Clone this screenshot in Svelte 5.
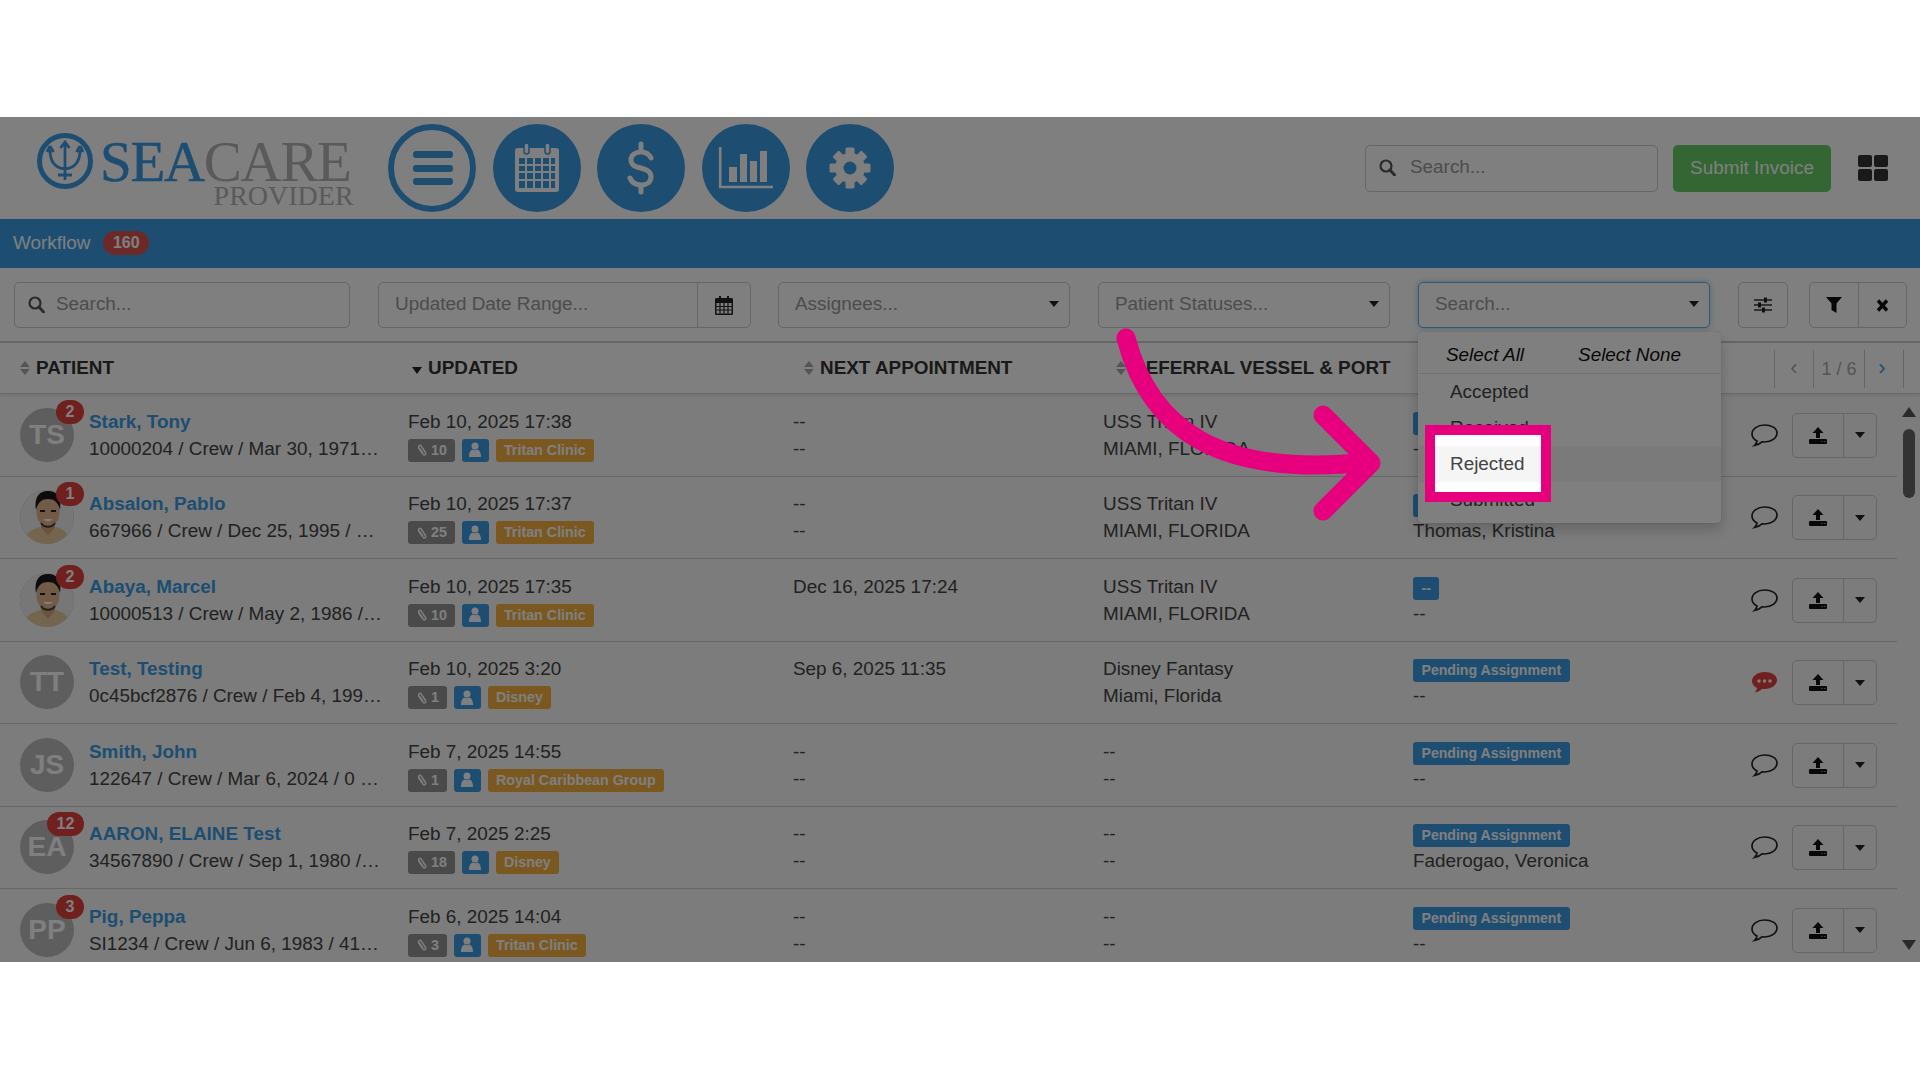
<script>
  const rows = [
    { name: 'Stark, Tony', ini: 'TS', badge: 2, info: '10000204 / Crew / Mar 30, 1971…', date: 'Feb 10, 2025 17:38', clips: 10, org: 'Tritan Clinic', appt: ['--', '--'], vessel: ['USS Tritan IV', 'MIAMI, FLORIDA'], status: '--', who: '--' },
    { name: 'Absalon, Pablo', photo: true, badge: 1, info: '667966 / Crew / Dec 25, 1995 / …', date: 'Feb 10, 2025 17:37', clips: 25, org: 'Tritan Clinic', appt: ['--', '--'], vessel: ['USS Tritan IV', 'MIAMI, FLORIDA'], status: '--', who: 'Thomas, Kristina' },
    { name: 'Abaya, Marcel', photo: true, badge: 2, info: '10000513 / Crew / May 2, 1986 /…', date: 'Feb 10, 2025 17:35', clips: 10, org: 'Tritan Clinic', appt: ['Dec 16, 2025 17:24', ''], vessel: ['USS Tritan IV', 'MIAMI, FLORIDA'], status: '--', who: '--' },
    { name: 'Test, Testing', ini: 'TT', info: '0c45bcf2876 / Crew / Feb 4, 199…', date: 'Feb 10, 2025 3:20', clips: 1, org: 'Disney', appt: ['Sep 6, 2025 11:35', ''], vessel: ['Disney Fantasy', 'Miami, Florida'], status: 'Pending Assignment', who: '--', unread: true },
    { name: 'Smith, John', ini: 'JS', info: '122647 / Crew / Mar 6, 2024 / 0 …', date: 'Feb 7, 2025 14:55', clips: 1, org: 'Royal Caribbean Group', appt: ['--', '--'], vessel: ['--', '--'], status: 'Pending Assignment', who: '--' },
    { name: 'AARON, ELAINE Test', ini: 'EA', badge: 12, info: '34567890 / Crew / Sep 1, 1980 /…', date: 'Feb 7, 2025 2:25', clips: 18, org: 'Disney', appt: ['--', '--'], vessel: ['--', '--'], status: 'Pending Assignment', who: 'Faderogao, Veronica' },
    { name: 'Pig, Peppa', ini: 'PP', badge: 3, info: 'SI1234 / Crew / Jun 6, 1983 / 41…', date: 'Feb 6, 2025 14:04', clips: 3, org: 'Tritan Clinic', appt: ['--', '--'], vessel: ['--', '--'], status: 'Pending Assignment', who: '--' }
  ];
  const statuses = ['Accepted', 'Received', 'Rejected', 'Submitted'];
  const teeth = [0, 45, 90, 135];
</script>

{#snippet searchIcon()}
  <svg class="mag" viewBox="0 0 17 17" width="17" height="17">
    <circle cx="7" cy="7" r="5.500" fill="none" stroke="currentColor" stroke-width="2.200" />
    <path d="M11 11l4.500 5" stroke="currentColor" stroke-width="2.800" stroke-linecap="round" />
  </svg>
{/snippet}

{#snippet sortIcon()}
  <span class="sort"><i class="up"></i><i class="down"></i></span>
{/snippet}

<div class="page">
  <div class="app">
    <header class="top">
      <div class="logo">
        <svg class="mark" viewBox="0 0 56 56" width="56" height="56">
          <circle cx="28" cy="28" r="25.500" fill="none" stroke="#3a9de4" stroke-width="5" />
          <path d="M28 9v38M23.500 15l4.500-6 4.500 6M13 17c0 11 5 18 15 19 10-1 15-8 15-19M13 13l-3 6M13 13l3.500 6M43 13l-3.500 6M43 13l3 6M21 42h14" fill="none" stroke="#3a9de4" stroke-width="2.800" />
        </svg>
        <div class="word">
          <div class="brand"><span class="sea">SEA</span><span class="care">CARE</span></div>
          <div class="provider">PROVIDER</div>
        </div>
      </div>

      <nav class="circles">
        <div class="circle ghost">
          <svg viewBox="0 0 88 88" width="88" height="88">
            <rect x="25" y="27" width="40" height="7" rx="3" />
            <rect x="25" y="41" width="40" height="7" rx="3" />
            <rect x="25" y="54" width="40" height="7" rx="3" />
          </svg>
        </div>
        <div class="circle">
          <svg viewBox="0 0 88 88" width="88" height="88">
            <rect x="22" y="24" width="44" height="44" rx="3" fill="#fff" />
            <rect x="31" y="19" width="5" height="11" rx="2.500" fill="#fff" stroke="#3a9de4" stroke-width="1.500" />
            <rect x="52" y="19" width="5" height="11" rx="2.500" fill="#fff" stroke="#3a9de4" stroke-width="1.500" />
            <path d="M26 34h36v30H26z" fill="#3a9de4" />
            <path d="M33 34v30M41 34v30M49 34v30M57 34v30M26 41h36M26 48h36M26 56h36" stroke="#fff" stroke-width="2" />
          </svg>
        </div>
        <div class="circle">
          <svg viewBox="0 0 88 88" width="88" height="88">
            <path d="M54 34c-2-4-6-6-10-6-6 0-10 3-10 8 0 11 20 5 20 17 0 5-4 8-10 8-5 0-9-2-11-7M44 20v8M44 61v7" fill="none" stroke="#fff" stroke-width="5" stroke-linecap="round" />
          </svg>
        </div>
        <div class="circle">
          <svg viewBox="0 0 88 88" width="88" height="88">
            <path d="M18.200 23v40h52.800" fill="none" stroke="#fff" stroke-width="2.600" />
            <rect x="27" y="43" width="8" height="15" fill="#fff" />
            <rect x="38" y="30" width="7" height="28" fill="#fff" />
            <rect x="48" y="37" width="7" height="21" fill="#fff" />
            <rect x="58" y="27" width="7" height="31" fill="#fff" />
          </svg>
        </div>
        <div class="circle">
          <svg viewBox="0 0 88 88" width="88" height="88">
            <g fill="#fff">
              {#each teeth as t}
                <rect x="39.500" y="23.500" width="9" height="41" rx="1.500" transform="rotate({t} 44 44)" />
              {/each}
            </g>
            <circle cx="44" cy="44" r="15" fill="#fff" />
            <circle cx="44" cy="44" r="6.500" fill="#3a9de4" />
          </svg>
        </div>
      </nav>

      <div class="top-right">
        <div class="input search-top">{@render searchIcon()}<span class="ph">Search...</span></div>
        <button class="submit">Submit Invoice</button>
        <div class="grid-icon"><i></i><i></i><i></i><i></i></div>
      </div>
    </header>

    <div class="bar">
      <span>Workflow</span>
      <span class="count">160</span>
    </div>

    <div class="filters">
      <div class="input f-search">{@render searchIcon()}<span class="ph">Search...</span></div>
      <div class="input f-date">
        <span class="ph">Updated Date Range...</span>
        <span class="addon">
          <svg viewBox="0 0 18 19" width="18" height="19">
            <path d="M4 0h2v3H4zM12 0h2v3h-2z" fill="#222" />
            <rect x="0" y="2" width="18" height="17" rx="1.500" fill="#222" />
            <path d="M1.500 7h15v10.500h-15z" fill="#fff" />
            <path d="M5 7v10.500M9 7v10.500M13 7v10.500M1.500 10.500h15M1.500 14h15" stroke="#222" stroke-width="1.200" />
          </svg>
        </span>
      </div>
      <div class="input select f-assign"><span class="ph">Assignees...</span><i class="caret"></i></div>
      <div class="input select f-pstatus"><span class="ph">Patient Statuses...</span><i class="caret"></i></div>
      <div class="status-filter">
        <div class="input select focus"><span class="ph">Search...</span><i class="caret"></i></div>
        <div class="dropdown">
          <div class="dd-head"><span>Select All</span><span>Select None</span></div>
          <ul>
            {#each statuses as s}
              <li class:hot={s === 'Rejected'}>{s}</li>
            {/each}
          </ul>
        </div>
      </div>
      <button class="tool sliders">
        <svg viewBox="0 0 18 16" width="18" height="16">
          <path d="M0 3h18M0 8h18M0 13h18" stroke="#333" stroke-width="1.500" />
          <rect x="10" y="0.500" width="3" height="5" fill="#222" />
          <rect x="4" y="5.500" width="3" height="5" fill="#222" />
          <rect x="8" y="10.500" width="3" height="5" fill="#222" />
        </svg>
      </button>
      <div class="tool-group">
        <button class="tool">
          <svg viewBox="0 0 16 16" width="16" height="16"><path d="M0 0h16l-5.500 6.500V16l-5-3V6.500z" fill="#111" /></svg>
        </button>
        <button class="tool">
          <svg viewBox="0 0 13 13" width="13" height="13"><path d="M2 1.500l9 10M11 1.500l-9 10" stroke="#111" stroke-width="3.400" /></svg>
        </button>
      </div>
    </div>

    <div class="thead">
      <div class="th th-patient">{@render sortIcon()}PATIENT</div>
      <div class="th th-updated"><i class="sort-caret"></i>UPDATED</div>
      <div class="th th-next">{@render sortIcon()}NEXT APPOINTMENT</div>
      <div class="th th-vessel">{@render sortIcon()}REFERRAL VESSEL &amp; PORT</div>
      <div class="pager">
        <span class="pg"><em class="off">‹</em></span>
        <span class="pg mid">1 / 6</span>
        <span class="pg"><em class="on">›</em></span>
      </div>
    </div>

    <div class="tbody">
      <div class="rows">
        {#each rows as r}
          <div class="row">
            <div class="cell patient">
              <div class="avatar">
                {#if r.photo}
                  <svg viewBox="0 0 54 54" width="54" height="54">
                    <circle cx="27" cy="27" r="27" fill="#eee" />
                    <path d="M3 54C4 44 10 40 20 37l8 9 8-9c8 2 13 7 15 17z" fill="#e8ca9e" />
                    <path d="M21 30h14v8l-7 8-7-8z" fill="#d9a680" />
                    <ellipse cx="28" cy="22" rx="11.500" ry="15" fill="#e3b48e" />
                    <path d="M16 20C14 6 20 1 28 1s14 5 12 19c-2-8-6-11-12-11s-10 3-12 11z" fill="#1a1716" />
                    <path d="M21 33c3 5 11 5 14 0" fill="none" stroke="#4a3a30" stroke-width="2" />
                    <path d="M20 21h5M31 21h5" stroke="#2a2020" stroke-width="1.800" />
                    <path d="M23 29c3 3 7 3 10 0z" fill="#fff" />
                  </svg>
                {:else}
                  {r.ini}
                {/if}
                {#if r.badge}<span class="pill" class:wide={r.badge > 9}>{r.badge}</span>{/if}
              </div>
              <div class="who">
                <div class="line"><a href="#top">{r.name}</a></div>
                <div class="line">{r.info}</div>
              </div>
            </div>
            <div class="cell updated">
              <div class="line">{r.date}</div>
              <div class="line chips">
                <span class="chip grey">
                  <svg viewBox="0 0 13 14" width="12" height="14"><path d="M2.500 4.500l5 7c1.500 2 4 .2 2.700-1.800L5.500 2.500C4.500 1 2 2.500 3 4.200l4.500 6.300" fill="none" stroke="#fff" stroke-width="1.600" /></svg>
                  {r.clips}
                </span>
                <span class="chip blue icon">
                  <svg viewBox="0 0 14 16" width="14" height="16"><circle cx="7" cy="4" r="3.500" fill="#fff" /><path d="M1 15c0-5 2-7 3.500-7.500 1.500 1 3.500 1 5 0C11 8 13 10 13 15z" fill="#fff" /></svg>
                </span>
                <span class="chip orange">{r.org}</span>
              </div>
            </div>
            <div class="cell next">
              <div class="line">{r.appt[0]}</div>
              <div class="line">{r.appt[1]}</div>
            </div>
            <div class="cell vessel">
              <div class="line">{r.vessel[0]}</div>
              <div class="line">{r.vessel[1]}</div>
            </div>
            <div class="cell state">
              <div class="line status-line"><span class="chip blue pad">{r.status}</span></div>
              <div class="line">{r.who}</div>
            </div>
            <div class="cell acts">
              <svg class="note" viewBox="0 0 27 23" width="27" height="23">
                {#if r.unread}
                  <path d="M13.500 1C6.600 1 1 5 1 10c0 3 2 5.500 5 7-.3 1.800-1.200 3.300-2.500 4.500 3-.5 5.500-1.700 7.500-3.600.8.1 1.700.1 2.500.1 6.900 0 12.500-4 12.500-9S20.400 1 13.500 1z" fill="#e0403c" />
                  <circle cx="8" cy="10" r="1.700" fill="#fff" /><circle cx="13.500" cy="10" r="1.700" fill="#fff" /><circle cx="19" cy="10" r="1.700" fill="#fff" />
                {:else}
                  <path d="M13.500 1C6.600 1 1 5 1 10c0 3 2 5.500 5 7-.3 1.800-1.200 3.300-2.500 4.500 3-.5 5.500-1.700 7.500-3.600.8.1 1.700.1 2.500.1 6.900 0 12.500-4 12.500-9S20.400 1 13.500 1z" fill="none" stroke="#222" stroke-width="1.700" />
                {/if}
              </svg>
              <div class="split">
                <button>
                  <svg viewBox="0 0 18 17" width="18" height="17">
                    <path d="M9 0l5.500 6H11v5H7V6H3.500z" fill="#111" />
                    <rect x="0" y="12" width="18" height="5" rx="1" fill="#111" />
                    <path d="M12.500 14.500h1.500M15 14.500h1.500" stroke="#888" stroke-width="1" />
                  </svg>
                </button>
                <button class="more"><i class="caret"></i></button>
              </div>
            </div>
          </div>
        {/each}
      </div>
      <div class="scroll">
        <i class="arrow-up"></i>
        <i class="thumb"></i>
        <i class="arrow-down"></i>
      </div>
    </div>

    <div class="spot"></div>
    <svg class="arrow" viewBox="0 117 1920 845" width="1920" height="845">
      <path d="M1126 338C1150 430 1220 478 1368 462M1323 415l48 48-48 48" fill="none" stroke="#e6007e" stroke-width="19" stroke-linecap="round" stroke-linejoin="round" />
    </svg>
  </div>
</div>

<style>
  :global(body) {
    margin: 0;
    background: #fff;
  }

  .page {
    height: 1080px;
    padding-top: 117px;
    box-sizing: border-box;
    overflow: hidden;
    font-family: "Liberation Sans", Arial, sans-serif;
    font-size: 18.900px;
    color: #444;
  }

  .app {
    position: relative;
    width: 1920px;
    height: 845px;
    overflow: hidden;
    background: #fff;
  }

  .top {
    height: 102px;
    display: flex;
    align-items: center;
    padding: 0 32px 0 37px;
    box-sizing: border-box;
  }

  .logo {
    width: 351px;
    display: flex;
    align-items: flex-start;
    height: 76px;
  }

  .mark {
    margin-top: 3px;
    flex: none;
  }

  .word {
    margin-left: 7px;
    font-family: "Liberation Serif", serif;
  }

  .brand {
    font-size: 57px;
    line-height: 46px;
    letter-spacing: -1.300px;
    margin-top: 9px;
    white-space: nowrap;
  }

  .sea {
    color: #3a9de4;
    -webkit-text-stroke: 0.500px #3a9de4;
  }

  .care {
    color: #b4b4b4;
  }

  .provider {
    font-size: 28px;
    line-height: 20px;
    color: #b4b4b4;
    text-align: right;
    margin-top: 1px;
    margin-right: -3px;
  }

  .circles {
    display: flex;
    gap: 16.500px;
  }

  .circle {
    width: 88px;
    height: 88px;
    border-radius: 50%;
    background: #3a9de4;
    display: flex;
    align-items: center;
    justify-content: center;
    color: #fff;
  }

  .circle.ghost {
    background: #fff;
    box-sizing: border-box;
    border: 6px solid #3a9de4;
  }

  .circle.ghost svg {
    flex: none;
    fill: #3a9de4;
  }

  .top-right {
    margin-left: auto;
    display: flex;
    align-items: center;
  }

  .input {
    height: 46px;
    box-sizing: border-box;
    border: 1.500px solid #ccc;
    border-radius: 5px;
    background: #fff;
    display: flex;
    align-items: center;
    padding: 0 16px 2px;
    flex: none;
  }

  .ph {
    color: #999;
  }

  .mag {
    color: #555;
    margin: 0 11px 0 -3px;
    flex: none;
  }

  .search-top {
    width: 293px;
    height: 47px;
  }

  .search-top .mag {
    margin-right: 14px;
  }

  .submit {
    width: 158px;
    height: 47px;
    margin-left: 15px;
    border: 0;
    border-radius: 5px;
    background: #66cc66;
    color: #fff;
    font: inherit;
    padding: 0;
  }

  .grid-icon {
    margin-left: 27px;
    display: grid;
    grid-template-columns: 14px 14px;
    gap: 2px;
  }

  .grid-icon i {
    height: 12px;
    border-radius: 2px;
    background: #333;
  }

  .bar {
    height: 49px;
    box-sizing: border-box;
    padding: 0 0 1px 13px;
    background: #3a9de4;
    color: #fff;
    display: flex;
    align-items: center;
  }

  .count {
    margin-left: 13px;
    width: 46px;
    height: 24px;
    border-radius: 12px;
    background: #d9534f;
    font-size: 16px;
    font-weight: 700;
    display: flex;
    align-items: center;
    justify-content: center;
  }

  .filters {
    height: 75px;
    box-sizing: border-box;
    border-bottom: 2px solid #ccc;
    display: flex;
    padding: 14px 0 0 14px;
    align-items: flex-start;
  }

  .f-search {
    width: 336px;
  }

  .f-date {
    width: 373px;
    margin-left: 28px;
    justify-content: space-between;
    padding: 0 0 0 16px;
  }

  .f-date .ph {
    padding-bottom: 2px;
  }

  .addon {
    width: 52px;
    height: 100%;
    border-left: 1.500px solid #ccc;
    display: flex;
    align-items: center;
    justify-content: center;
  }

  .select {
    justify-content: space-between;
    padding-right: 10px;
  }

  .caret {
    width: 0;
    height: 0;
    border: 5px solid transparent;
    border-top: 6px solid #222;
    border-bottom: 0;
  }

  .f-assign {
    width: 292px;
    margin-left: 27px;
  }

  .f-pstatus {
    width: 292px;
    margin-left: 28px;
  }

  .status-filter {
    position: relative;
    width: 292px;
    margin-left: 28px;
    flex: none;
  }

  .status-filter .input {
    width: 292px;
  }

  .focus {
    border-color: #66afe9;
    box-shadow: 0 0 6px rgba(102, 175, 233, 0.6);
  }

  .dropdown {
    position: absolute;
    z-index: 3;
    top: 50px;
    left: 0;
    width: 303px;
    height: 191px;
    box-sizing: border-box;
    background: #fff;
    border-radius: 4px;
    box-shadow: 0 6px 14px rgba(0, 0, 0, 0.2), 0 0 1px rgba(0, 0, 0, 0.3);
  }

  .dd-head {
    height: 42px;
    box-sizing: border-box;
    border-bottom: 1px solid #e5e5e5;
    display: flex;
    gap: 54px;
    padding: 4px 0 0 28px;
    align-items: center;
    font-style: italic;
    color: #111;
  }

  ul {
    list-style: none;
    margin: 0;
    padding: 0;
  }

  li {
    height: 36px;
    line-height: 35px;
    padding-left: 32px;
    color: #444;
  }

  li.hot {
    background: #f5f5f5;
  }

  .tool {
    border: 0;
    background: transparent;
    padding: 0;
    display: flex;
    align-items: center;
    justify-content: center;
    height: 100%;
    flex: 1;
  }

  .sliders {
    width: 50px;
    height: 46px;
    flex: none;
    margin-left: 28px;
    box-sizing: border-box;
    border: 1.500px solid #ccc;
    border-radius: 5px;
  }

  .tool-group {
    width: 98px;
    height: 46px;
    margin-left: 21px;
    box-sizing: border-box;
    border: 1.500px solid #ccc;
    border-radius: 5px;
    display: flex;
    flex: none;
  }

  .tool-group .tool + .tool {
    border-left: 1.500px solid #ccc;
  }

  .thead {
    position: relative;
    height: 51px;
    box-sizing: border-box;
    border-bottom: 1px solid #d5d5d5;
    box-shadow: 0 2px 3px rgba(0, 0, 0, 0.08);
    display: grid;
    grid-template-columns: 392px 391px 313px 1fr;
    padding-left: 20px;
    font-weight: 700;
    color: #333;
  }

  .th {
    display: flex;
    align-items: center;
  }

  .sort {
    display: inline-flex;
    flex-direction: column;
    gap: 2px;
    margin-right: 6px;
  }

  .sort i {
    width: 0;
    height: 0;
    border: 5.500px solid transparent;
  }

  .sort .up {
    border-top: 0;
    border-bottom: 6px solid #aaa;
  }

  .sort .down {
    border-bottom: 0;
    border-top: 6px solid #aaa;
  }

  .sort-caret {
    width: 0;
    height: 0;
    border: 5.500px solid transparent;
    border-top: 7px solid #222;
    border-bottom: 0;
    margin: 5px 6px 0 0;
  }

  .th-next {
    padding-left: 1px;
  }

  .th-vessel {
    white-space: nowrap;
  }

  .pager {
    position: absolute;
    top: 7px;
    left: 1774px;
    display: flex;
    height: 38px;
    font-weight: 400;
    color: #aaa;
  }

  .pg {
    width: 38px;
    display: flex;
    align-items: center;
    justify-content: center;
    border-left: 1px solid #ccc;
  }

  .pg:last-child {
    border-right: 1px solid #ccc;
  }

  .pg.mid {
    width: 50px;
    font-size: 18px;
  }

  .pg em {
    font-style: normal;
    font-size: 22px;
    margin-top: -3px;
  }

  .pg .on {
    color: #3a9de4;
    margin-right: 4px;
  }

  .tbody {
    display: flex;
    height: 568px;
    overflow: hidden;
    background: #f8f8f8;
  }

  .rows {
    flex: none;
    width: 1897px;
  }

  .row {
    height: 82.500px;
    box-sizing: border-box;
    border-bottom: 1px solid #ccc;
    display: grid;
    grid-template-columns: 388px 385px 310px 310px 338px 146px;
    padding-left: 20px;
    align-items: center;
  }

  .cell {
    min-width: 0;
  }

  .line {
    height: 27px;
    line-height: 27px;
    white-space: nowrap;
  }

  .patient {
    display: flex;
    align-items: center;
    gap: 15px;
  }

  .avatar {
    position: relative;
    flex: none;
    width: 54px;
    height: 54px;
    border-radius: 50%;
    background: #bdbdbd;
    color: #fff;
    font-size: 28px;
    font-weight: 700;
    display: flex;
    align-items: center;
    justify-content: center;
  }

  .avatar svg {
    border-radius: 50%;
  }

  .pill {
    position: absolute;
    top: -8px;
    right: -10px;
    width: 28px;
    height: 24px;
    border-radius: 12px;
    background: #e0403c;
    color: #fff;
    font-size: 16px;
    display: flex;
    align-items: center;
    justify-content: center;
  }

  .pill.wide {
    width: 37px;
  }

  a {
    color: #3a9de4;
    font-weight: 700;
    text-decoration: none;
  }

  .chips {
    display: flex;
    gap: 7px;
    align-items: flex-start;
    padding-top: 4px;
    box-sizing: border-box;
  }

  .chip {
    height: 23px;
    box-sizing: border-box;
    border-radius: 3px;
    color: #fff;
    font-size: 14.300px;
    font-weight: 700;
    display: inline-flex;
    align-items: center;
    padding: 0 8px;
    gap: 3px;
    flex: none;
  }

  .grey {
    background: #959595;
  }

  .blue {
    background: #3a9de4;
  }

  .blue.icon {
    width: 27px;
    padding: 0;
    justify-content: center;
  }

  .orange {
    background: #f5b041;
  }

  .status-line {
    display: flex;
    align-items: flex-start;
    padding-top: 4px;
    box-sizing: border-box;
  }

  .pad {
    padding: 0 8.500px;
    font-size: 14.100px;
  }

  .acts {
    display: flex;
    align-items: center;
    gap: 14px;
    margin-top: 1px;
  }

  .note {
    flex: none;
  }

  .split {
    width: 85px;
    height: 45px;
    box-sizing: border-box;
    border: 1.500px solid #ccc;
    border-radius: 5px;
    display: flex;
  }

  .split button {
    flex: 1;
    border: 0;
    background: transparent;
    padding: 0;
    display: flex;
    align-items: center;
    justify-content: center;
  }

  .split .more {
    flex: none;
    width: 33px;
    border-left: 1.500px solid #ccc;
  }

  .scroll {
    flex: 1;
    position: relative;
    display: flex;
    flex-direction: column;
    align-items: center;
    padding-top: 13px;
  }

  .arrow-up {
    width: 0;
    height: 0;
    border: 7px solid transparent;
    border-bottom: 10px solid #555;
    border-top: 0;
  }

  .thumb {
    width: 12px;
    height: 69px;
    border-radius: 6px;
    background: #666;
    margin-top: 12px;
  }

  .arrow-down {
    width: 0;
    height: 0;
    border: 7px solid transparent;
    border-top: 10px solid #555;
    border-bottom: 0;
    margin-top: 442px;
  }

  .spot {
    position: absolute;
    z-index: 5;
    left: 1425px;
    top: 308px;
    width: 126px;
    height: 77px;
    box-sizing: border-box;
    border: 10px solid #e6007e;
    box-shadow: 0 0 0 3000px rgba(0, 0, 0, 0.5);
  }

  .arrow {
    position: absolute;
    z-index: 6;
    left: 0;
    top: 0;
  }
</style>
